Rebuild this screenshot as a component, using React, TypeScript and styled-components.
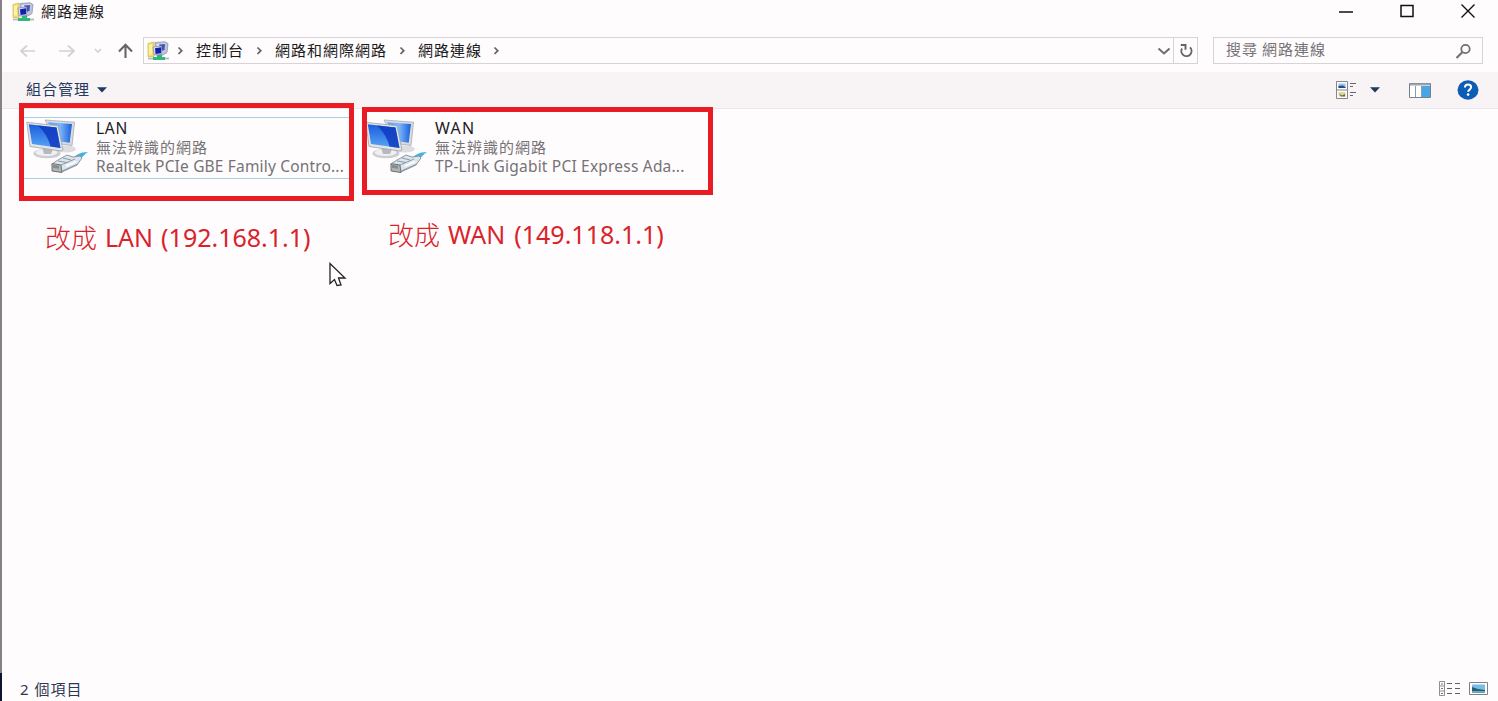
import React from "react";
import styled, { createGlobalStyle } from "styled-components";

const GlobalStyle = createGlobalStyle`
  * { box-sizing: border-box; }
  html, body { margin: 0; padding: 0; }
  body { overflow: hidden; background: #fefcfd; }
`;

const Window = styled.div`
  position: relative;
  display: flex;
  flex-direction: column;
  width: 1498px;
  height: 701px;
  background: #fefcfd;
  border-left: 2px solid #858286;
  font-family: "Noto Sans", "Noto Sans CJK TC", sans-serif;
  font-size: 15px;
  letter-spacing: 1px;
  line-height: 20px;
  color: #1c1a1c;
`;

const TitleBar = styled.header`
  display: flex;
  align-items: center;
  height: 24px;
  padding-left: 10px;
`;

const Title = styled.h1`
  flex: 1;
  margin: 0 0 0 6px;
  padding-bottom: 2px;
  font-size: 15px;
  font-weight: 400;
  line-height: 22px;
`;

const CaptionButton = styled.button`
  display: flex;
  align-items: center;
  justify-content: center;
  width: 61px;
  height: 24px;
  padding: 0 0 2px;
  border: 0;
  background: none;
`;

const CaptionButtons = styled.div`
  display: flex;
`;

const AddressRow = styled.nav`
  display: flex;
  align-items: center;
  height: 27px;
  margin-top: 13px;
  padding: 0 15px 0 17px;
`;

const NavIcons = styled.div`
  display: flex;
  align-items: center;
  width: 124px;
`;

const AddressBox = styled.div`
  display: flex;
  align-items: center;
  width: 1055px;
  height: 27px;
  padding-left: 3px;
  border: 1px solid #d7d3d6;
`;

const Crumb = styled.span<{ $w: number; $indent?: number }>`
  width: ${(p) => p.$w}px;
  height: 25px;
  padding-left: ${(p) => p.$indent ?? 0}px;
  line-height: 24px;
  white-space: nowrap;
`;

const CrumbGap = styled.span<{ $w: number }>`
  display: flex;
  justify-content: center;
  width: ${(p) => p.$w}px;
`;

const Spacer = styled.div`
  flex: 1;
`;

const RefreshCell = styled.div`
  display: flex;
  align-items: center;
  justify-content: center;
  width: 24px;
  height: 25px;
  margin-left: 3px;
  padding-left: 1px;
  border-left: 1px solid #d7d3d6;
`;

const SearchBox = styled.div`
  display: flex;
  align-items: center;
  justify-content: space-between;
  width: 270px;
  height: 27px;
  margin-left: 15px;
  padding: 0 10px 0 12px;
  border: 1px solid #d7d3d6;
  color: #767276;
  line-height: 23px;
`;

const SearchHint = styled.span`
  padding-bottom: 2px;
  word-spacing: -1px;
`;

const Toolbar = styled.div`
  display: flex;
  align-items: center;
  height: 37px;
  margin-top: 8px;
  padding: 0 19px 0 24px;
  background: #f8f3f5;
  border-bottom: 1px solid #ece7ec;
  color: #26385c;
`;

const Organize = styled.span`
  margin-right: 7px;
  padding-bottom: 2px;
  line-height: 34px;
`;

const ToolIcon = styled.span<{ $gap: number }>`
  display: flex;
  margin-left: ${(p) => p.$gap}px;
`;

const Content = styled.main`
  flex: 1;
  display: flex;
  align-items: flex-start;
  padding: 8px 0 0 22px;
`;

const Connection = styled.div<{ $selected?: boolean; $w: number; $gap: number }>`
  display: flex;
  width: ${(p) => p.$w}px;
  height: 62px;
  margin-right: ${(p) => p.$gap}px;
  border: solid ${(p) => (p.$selected ? "#a9cfe6" : "transparent")};
  border-width: 1px 0;
`;

const ConnectionText = styled.div<{ $gap: number }>`
  display: flex;
  flex-direction: column;
  margin-left: ${(p) => p.$gap}px;
  padding-top: 1px;
  white-space: nowrap;
`;

const Line = styled.div<{ $muted?: boolean; $size?: number; $track?: number }>`
  height: 19px;
  line-height: 19px;
  font-size: ${(p) => p.$size ?? 15}px;
  letter-spacing: ${(p) => p.$track ?? 0}px;
  color: ${(p) => (p.$muted ? "#777276" : "#1c1a1c")};
`;

const StatusBar = styled.footer`
  display: flex;
  align-items: center;
  height: 24px;
  padding: 0 10px 0 18px;
  color: #2d3852;
  font-size: 15px;
`;

const StatusIcons = styled.div`
  display: flex;
  align-items: center;
  gap: 8px;
  margin-left: auto;
  padding-bottom: 2px;
`;

const Highlight = styled.div<{ $x: number; $y: number; $w: number; $h: number }>`
  position: absolute;
  left: ${(p) => p.$x - 2}px;
  top: ${(p) => p.$y}px;
  width: ${(p) => p.$w}px;
  height: ${(p) => p.$h}px;
  border: 5px solid #e91c24;
`;

const Note = styled.div<{ $x: number; $y: number }>`
  position: absolute;
  left: ${(p) => p.$x - 2}px;
  top: ${(p) => p.$y}px;
  display: flex;
  gap: 8px;
  font-size: 26px;
  letter-spacing: 0;
  line-height: 36px;
  color: #d9232b;
  white-space: nowrap;
`;

const NoteHan = styled.span`
  font-family: "Noto Sans CJK TC", sans-serif;
  font-weight: 300;
`;

const NoteLatin = styled.span<{ $track: number; $word: number }>`
  font-family: "Noto Sans", sans-serif;
  font-size: 25px;
  letter-spacing: ${(p) => p.$track}px;
  word-spacing: ${(p) => p.$word}px;
`;

const Pointer = styled.svg`
  position: absolute;
  left: 327px;
  top: 262px;
`;

const WindowEdge = styled.div`
  position: absolute;
  left: -2px;
  bottom: 0;
  width: 2px;
  height: 28px;
  background: #0b1530;
`;

const NetworkIcon = () => (
  <svg width="23" height="20" viewBox="0 0 23 20">
    <path d="M1 2.500l6-1.500v14.500H1z" fill="#f1dd6b" stroke="#cdb85a" strokeWidth=".7" />
    <path d="M2 4l3-1v10.500H2z" fill="#fbf3a0" />
    <path d="M8 1.500L18 .8l3 1.700-1 9-4 2.500H9z" fill="#bfc3d6" stroke="#8689a4" strokeWidth=".7" />
    <path d="M10 3l8-.7-.5 7-7 1z" fill="#dfe2f0" />
    <path d="M12 3.500l6-.5-.5 6-3 1z" fill="#4054b8" />
    <path d="M6 6l8.500-1v8.500L7 14z" fill="#d9dcef" stroke="#8186ab" strokeWidth=".7" />
    <path d="M8 7.200l6-.9v6l-5.500.7z" fill="#141fae" />
    <path d="M1 17.500h21" stroke="#b6bab8" strokeWidth="1.800" />
    <path d="M10 14h5v2h3v3H6v-3h4z" fill="#2fb87a" />
  </svg>
);

const Chevron = () => (
  <svg width="7" height="9" viewBox="0 0 7 9">
    <path d="M1.500 1.500L4.800 4.700 1.500 8" fill="none" stroke="#666266" strokeWidth="1.700" />
  </svg>
);

const Caret = () => (
  <svg width="10" height="6" viewBox="0 0 10 6">
    <path d="M0 .3h10L5 5.500z" fill="#1f3a5c" />
  </svg>
);

const ConnectionIcon = ({ id }: { id: string }) => (
  <svg width="64" height="58" viewBox="0 -1 64 58">
    <defs>
      <linearGradient id={`${id}-front`} x1="0" y1="0" x2="0" y2="1">
        <stop offset="0" stopColor="#1c5ddd" />
        <stop offset="1" stopColor="#58a5f5" />
      </linearGradient>
      <linearGradient id={`${id}-back`} x1="0" y1="0" x2="1" y2="0">
        <stop offset="0" stopColor="#5ba0f2" />
        <stop offset=".5" stopColor="#7ab8f8" />
        <stop offset="1" stopColor="#1c5ddd" />
      </linearGradient>
    </defs>
    <ellipse cx="42" cy="30" rx="10" ry="3.500" fill="#dddde1" />
    <path d="M21 1l29.500 2.200L48 26.500l-15-2z" fill="#d9dcdf" stroke="#a5abb1" strokeWidth=".8" />
    <path d="M24 3.200l24 1.900-2.300 18.600-12-1.500z" fill={`url(#${id}-back)`} />
    <ellipse cx="23" cy="34.500" rx="13.500" ry="4.800" fill="#cccdd1" />
    <ellipse cx="22.500" cy="33.500" rx="11" ry="3.500" fill="#f0f0f2" />
    <path d="M18 28l11 2-2 5h-7z" fill="#b6b9bf" />
    <path d="M2.800 3.300L34 6.800 39 31l-2 1L6 27.500z" fill="#e3e5e7" stroke="#9da3a9" strokeWidth=".8" />
    <path d="M4.800 5.300L32.500 8.500 36.500 29 8 25z" fill={`url(#${id}-front)`} />
    <path d="M14 6.400L32.500 8.500 36.500 29l-10-1.400C25 20 20 12 14 6.400z" fill="#0f3bc0" opacity=".85" />
    <path d="M48 41c3-5 8-8 16-8-4 2-6 7-11 9z" fill="#43b4d8" />
    <path d="M28 45l6-4 9-5 6 2 7-1 2 2-5 7-15 7-9-1z" fill="#dce4ec" stroke="#8291a0" strokeWidth=".9" />
    <path d="M28 44.500l9 1.500 1 7.500-10-1.500z" fill="#b0b5b2" stroke="#626d75" strokeWidth=".9" />
    <path d="M30 46v3m2-2.700v3m2-2.700v3" stroke="#535c60" strokeWidth=".9" />
    <path d="M37 46l14-6m-13 12l16-7M34 42l9 1.500m-4-4.500l8 2" stroke="#8291a0" strokeWidth=".9" fill="none" />
    <path d="M42 47l10-4.500" stroke="#f9fcff" strokeWidth="2" />
  </svg>
);

export default function App() {
  return (
    <>
      <GlobalStyle />
      <Window>
        <TitleBar>
          <NetworkIcon />
          <Title>網路連線</Title>
          <CaptionButtons>
            <CaptionButton aria-label="最小化">
              <svg width="14" height="14"><path d="M0 8h14" stroke="#111" strokeWidth="1.500" /></svg>
            </CaptionButton>
            <CaptionButton aria-label="最大化">
              <svg width="14" height="14"><rect x="1" y="1.500" width="12" height="11" fill="none" stroke="#111" strokeWidth="1.500" /></svg>
            </CaptionButton>
            <CaptionButton aria-label="關閉">
              <svg width="14" height="14"><path d="M.5.500l13 13m0-13L.5 13.500" stroke="#111" strokeWidth="1.400" /></svg>
            </CaptionButton>
          </CaptionButtons>
        </TitleBar>

        <AddressRow>
          <NavIcons>
            <svg width="124" height="20" viewBox="0 0 124 20" fill="none">
              <path d="M16 10H2m6-5.500L2 10l6 5.500M40 10h15m-6-5.500l6 5.500-6 5.500" stroke="#d4d0d3" strokeWidth="1.700" />
              <path d="M76 8l3 3 3-3" stroke="#d4d0d3" strokeWidth="1.600" />
              <path d="M106.500 17V4m-6.500 6.500l6.500-6.700 6.500 6.700" stroke="#686468" strokeWidth="2.100" />
            </svg>
          </NavIcons>
          <AddressBox>
            <NetworkIcon />
            <CrumbGap $w={21}><Chevron /></CrumbGap>
            <Crumb $w={53} $indent={5}>控制台</Crumb>
            <CrumbGap $w={31}><Chevron /></CrumbGap>
            <Crumb $w={112}>網路和網際網路</Crumb>
            <CrumbGap $w={31}><Chevron /></CrumbGap>
            <Crumb $w={64}>網路連線</Crumb>
            <CrumbGap $w={29}><Chevron /></CrumbGap>
            <Spacer />
            <svg width="13" height="9"><path d="M1.500 2.500L7 7.500l5.500-5" fill="none" stroke="#716d71" strokeWidth="2" /></svg>
            <RefreshCell>
              <svg width="15" height="15" viewBox="0 0 15 15" fill="none" stroke="#666266" strokeWidth="1.900">
                <path d="M11 4.400A5.100 5.100 0 1 1 3 5.500" />
                <path d="M1.800 2h4.700v4.700" />
              </svg>
            </RefreshCell>
          </AddressBox>
          <SearchBox>
            <SearchHint>搜尋 網路連線</SearchHint>
            <svg width="17" height="16" viewBox="0 0 17 16" fill="none" stroke="#716d71">
              <circle cx="10.500" cy="6" r="4.200" strokeWidth="1.800" />
              <path d="M7.500 9L1.500 15" strokeWidth="2.200" />
            </svg>
          </SearchBox>
        </AddressRow>

        <Toolbar>
          <Organize>組合管理</Organize>
          <Caret />
          <Spacer />
          <ToolIcon $gap={0}>
            <svg width="20" height="18" viewBox="0 0 20 18">
              <path d="M.5.500h11v17H.5zM.5 9h11" fill="#fdfbfc" stroke="#85858b" />
              <path d="M2.500 2.500h7v4.500h-7z" fill="#8dc5ee" />
              <path d="M2.500 7V5l4-.5 3 1.500v1z" fill="#294b78" />
              <path d="M2.500 11h7v4.500h-7z" fill="#e2d5a1" />
              <path d="M3 12.500l3 2 3-1.500v2.500H5z" fill="#55743b" />
              <path d="M14 2.500h6M14 5.500h3M14 11.500h6M14 14.500h3" stroke="#68666e" />
            </svg>
          </ToolIcon>
          <ToolIcon $gap={14}><Caret /></ToolIcon>
          <ToolIcon $gap={29}>
            <svg width="22" height="15" viewBox="0 0 22 15">
              <path d="M.5.500h21v14H.5z" fill="#fff" stroke="#78818b" />
              <path d="M1 1.500h20" stroke="#99a4ad" strokeWidth="2" />
              <path d="M12 3h9v11h-9z" fill="#49a5e6" />
              <path d="M6.500 3v11M12.500 3v11" stroke="#929aa5" />
            </svg>
          </ToolIcon>
          <ToolIcon $gap={26}>
            <svg width="22" height="20" viewBox="0 0 22 20">
              <ellipse cx="11" cy="10" rx="10.500" ry="9.700" fill="#0d5db5" />
              <path d="M7.900 7.500C8 5.600 9.200 4.600 11 4.600s3.100 1 3.100 2.700c0 2.300-2.900 2.300-2.900 4.500" fill="none" stroke="#fff" strokeWidth="2" />
              <circle cx="11.100" cy="14.600" r="1.300" fill="#fff" />
            </svg>
          </ToolIcon>
        </Toolbar>

        <Content>
          <Connection $selected $w={325} $gap={14}>
            <ConnectionIcon id="lan" />
            <ConnectionText $gap={8}>
              <Line $size={15.500} $track={0.7}>LAN</Line>
              <Line $muted $track={1}>無法辨識的網路</Line>
              <Line $muted $size={15.500} $track={0.17}>Realtek PCIe GBE Family Contro...</Line>
            </ConnectionText>
          </Connection>
          <Connection $w={345} $gap={0}>
            <ConnectionIcon id="wan" />
            <ConnectionText $gap={8}>
              <Line $size={16} $track={1.3}>WAN</Line>
              <Line $muted $track={1}>無法辨識的網路</Line>
              <Line $muted $size={15.500} $track={0.2}>TP-Link Gigabit PCI Express Ada...</Line>
            </ConnectionText>
          </Connection>
        </Content>

        <StatusBar>
          <span>2 個項目</span>
          <StatusIcons>
            <svg width="22" height="15" viewBox="0 0 22 15" fill="none">
              <path d="M.5.500h5v14h-5zM.5 5h5M.5 10h5" stroke="#918e96" />
              <path d="M2 3h2M2 7.500h2M2 12.500h2" stroke="#77747d" />
              <path d="M8 2.500h5M8 7.500h5M8 12.500h5M16 2.500h5M16 7.500h5M16 12.500h5" stroke="#625e68" />
            </svg>
            <svg width="19" height="13" viewBox="0 0 19 13">
              <path d="M.5.500h18v12H.5z" fill="#fff" stroke="#7d8187" />
              <path d="M3 2.500h13v8H3z" fill="#79bde7" />
              <path d="M3 5l6 2 7 1v2.500H3z" fill="#27606f" />
              <path d="M3 9h13v1.500H3z" fill="#67a8cb" />
            </svg>
          </StatusIcons>
        </StatusBar>

        <Highlight $x={19} $y={103} $w={335} $h={98} />
        <Highlight $x={362} $y={107} $w={351} $h={88} />
        <Note $x={45} $y={219}>
          <NoteHan>改成</NoteHan>
          <NoteLatin $track={0} $word={1.500}>LAN (192.168.1.1)</NoteLatin>
        </Note>
        <Note $x={388} $y={216}>
          <NoteHan>改成</NoteHan>
          <NoteLatin $track={0} $word={2.500}>WAN (149.118.1.1)</NoteLatin>
        </Note>
        <Pointer width="18" height="26" viewBox="0 0 18 26">
          <path d="M1 1.500v20l4.500-4 2.500 6 4-.5-2.500-7H16z" fill="#fff" stroke="#242226" strokeWidth="1.300" />
        </Pointer>
        <WindowEdge />
      </Window>
    </>
  );
}
